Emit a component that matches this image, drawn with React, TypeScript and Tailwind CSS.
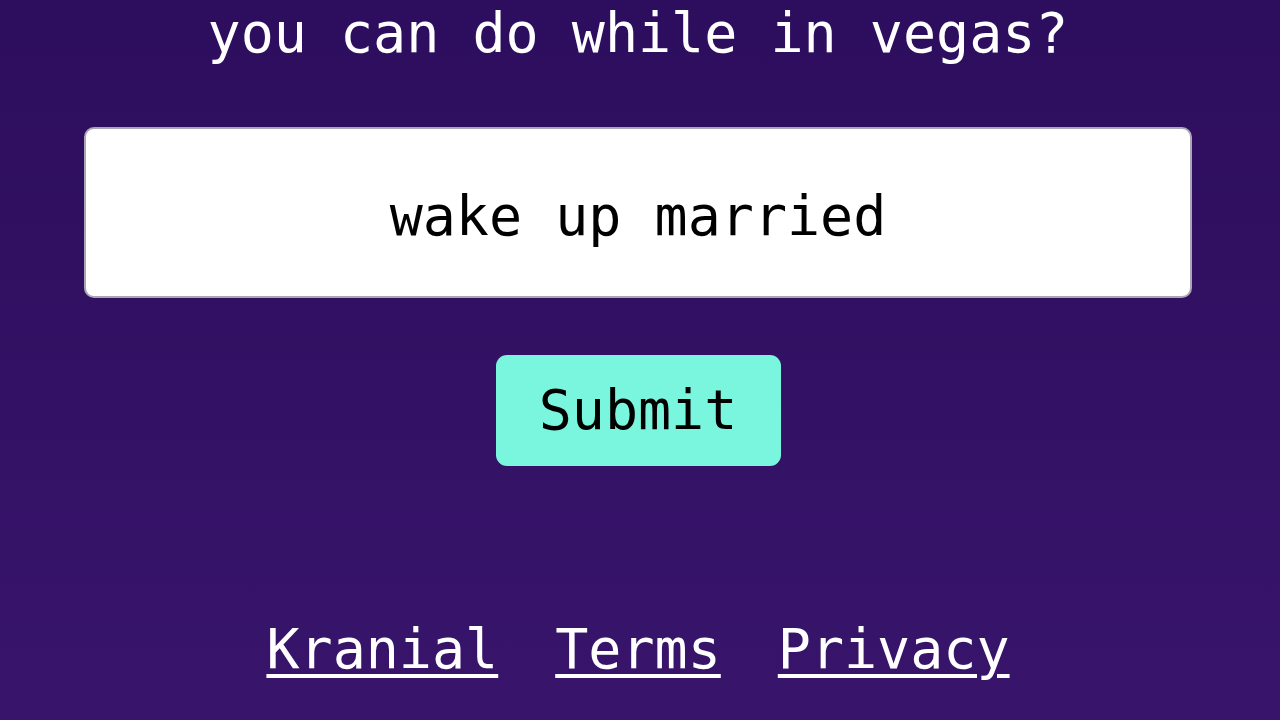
import React, { useState } from "react";

function App() {
  // answer typed into the box
  const [answer, setAnswer] = useState("wake up married");

  const links = ["Kranial", "Terms", "Privacy"];

  return (
    <div
      className="h-[720px] overflow-hidden bg-linear-to-b from-[#2d0d5d] to-[#38156b] text-white"
      style={{ fontFamily: '"DejaVu Sans Mono", "Liberation Mono", monospace' }}
    >
      <div className="flex flex-col items-center pl-[84px] pr-[88px]">
        {/* Question */}
        <h1 className="text-[55px] leading-[66px] font-normal text-center">
          you can do while in vegas?
        </h1>

        {/* Answer box */}
        <input
          value={answer}
          onChange={(e) => setAnswer(e.target.value)}
          className="mt-[61px] w-full h-[171px] pt-[6px] bg-white text-black text-[55px] text-center rounded-[10px] border-2 border-[#aaa6b6] outline-none"
        />

        {/* Submit */}
        <button className="mt-[57px] w-[285px] h-[111px] bg-[#7af6df] text-black text-[55px] rounded-[11px]">
          Submit
        </button>

        {/* Footer links */}
        <div className="mt-[150px] flex gap-[57px] text-[55px] leading-[66px]">
          {links.map((link) => (
            <a
              key={link}
              href="#"
              className="underline decoration-4 underline-offset-[6px] text-white"
            >
              {link}
            </a>
          ))}
        </div>
      </div>
    </div>
  );
}

export default App;
